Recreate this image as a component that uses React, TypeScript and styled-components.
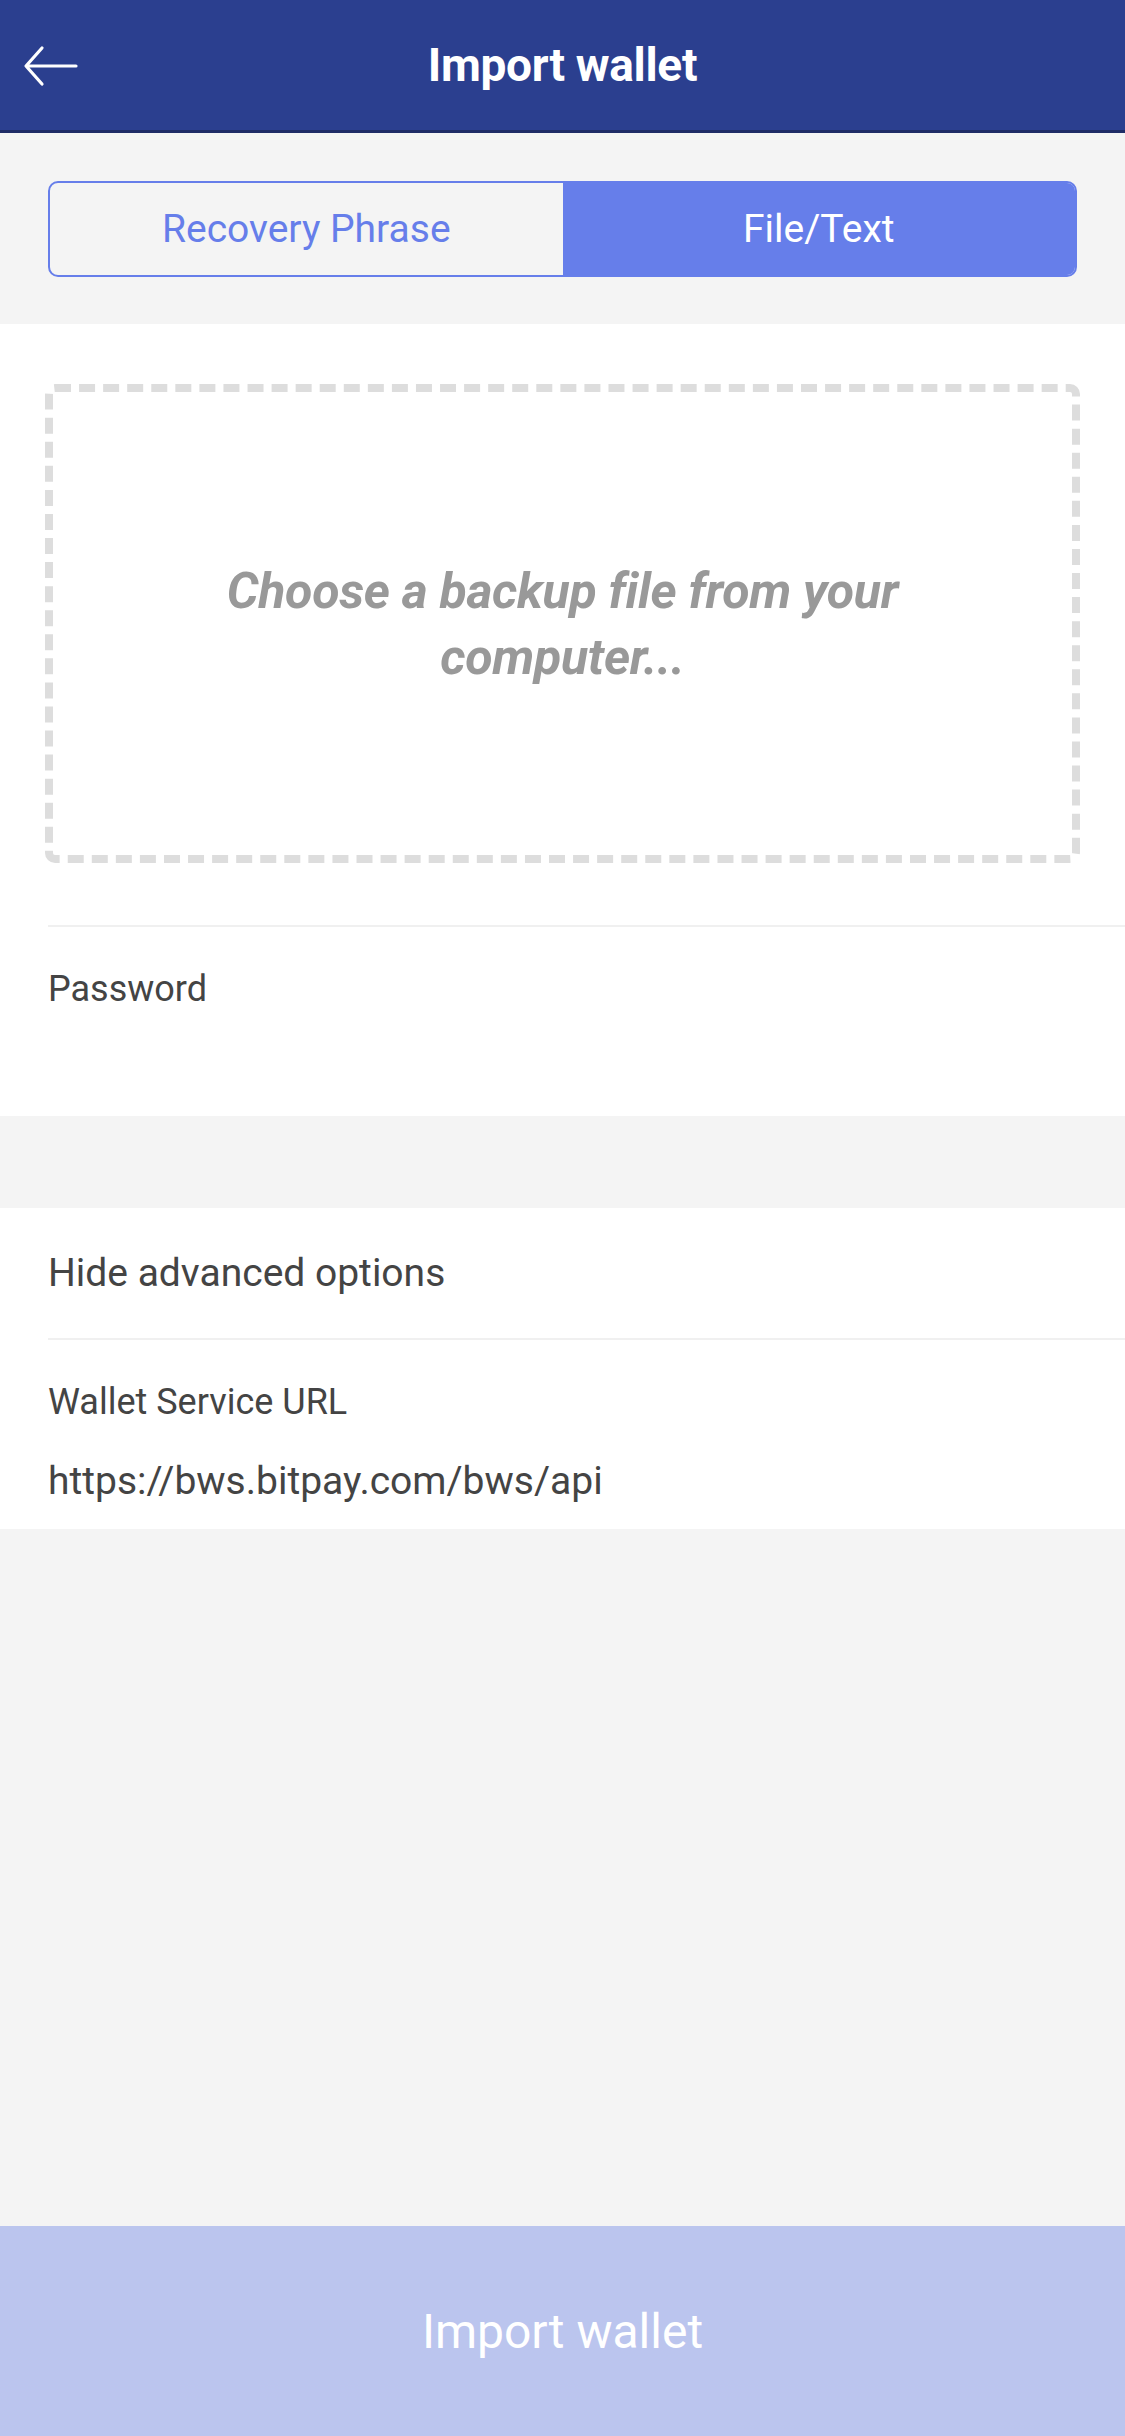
import React from "react";
import styled, { createGlobalStyle } from "styled-components";

const Global = createGlobalStyle`
  html, body { margin: 0; padding: 0; background: #f4f4f4; }
  * { box-sizing: border-box; }
  body { font-family: Roboto, "Liberation Sans", Arial, sans-serif; }
`;

const Page = styled.div`
  min-height: 100vh;
  display: flex;
  flex-direction: column;
  background: #f4f4f4;
`;

const Header = styled.header`
  height: 133px;
  background: #2b3f8f;
  border-bottom: 3px solid #1f2c66;
  display: flex;
  align-items: center;
  justify-content: center;
  position: relative;
`;

const BackButton = styled.button`
  position: absolute;
  left: 20px;
  top: 43px;
  width: 60px;
  height: 46px;
  border: 0;
  background: transparent;
  padding: 0;
  display: flex;
  align-items: center;
  justify-content: center;
`;

const Title = styled.h1`
  margin: 0;
  color: #fff;
  font-size: 46px;
  font-weight: 700;
  letter-spacing: -0.3px;
`;

const SegmentArea = styled.div`
  padding: 48px 48px 47px;
`;

const Segment = styled.div`
  display: grid;
  grid-template-columns: 1fr 1fr;
  height: 96px;
  border: 2.5px solid #667eea;
  border-radius: 10px;
  overflow: hidden;
`;

const SegmentButton = styled.div<{ $active?: boolean }>`
  display: flex;
  align-items: center;
  justify-content: center;
  font-size: 39px;
  color: ${(p) => (p.$active ? "#ffffff" : "#667eea")};
  background: ${(p) => (p.$active ? "#667eea" : "transparent")};
`;

const WhiteSection = styled.section`
  background: #ffffff;
`;

const DropZone = styled.div`
  margin: 60px 45px 62px;
  height: 479px;
  border: 8px dashed #dddddd;
  border-radius: 10px;
  display: flex;
  align-items: center;
  justify-content: center;
  padding: 0 140px;
`;

const DropText = styled.div`
  color: #999999;
  font-size: 50px;
  font-style: italic;
  font-weight: 700;
  line-height: 66px;
  text-align: center;
  letter-spacing: -0.3px;
`;

const Item = styled.div<{ $divider?: boolean }>`
  margin-left: 48px;
  border-top: ${(p) => (p.$divider ? "2px solid #f0f0f0" : "0")};
`;

const StackedField = styled.div`
  padding: 42px 0 25px;
  display: flex;
  flex-direction: column;
  gap: 36px;
`;

const Label = styled.div`
  font-size: 36px;
  color: #444444;
  line-height: 41px;
`;

const Value = styled.div`
  font-size: 39px;
  color: #444444;
  height: 45px;
  line-height: 45px;
`;

const Gap = styled.div`
  height: 92px;
`;

const ToggleRow = styled.div`
  height: 130px;
  display: flex;
  align-items: center;
  font-size: 39px;
  color: #444444;
`;

const Spacer = styled.div`
  flex: 1;
`;

const ImportButton = styled.button`
  height: 210px;
  border: 0;
  background: #bbc5ee;
  color: #ffffff;
  font-family: Roboto, "Liberation Sans", Arial, sans-serif;
  font-size: 48px;
  font-weight: 400;
  width: 100%;
`;

export default function App() {
  return (
    <Page>
      <Global />
      <Header>
        <BackButton aria-label="Back">
          <svg width="56" height="42" viewBox="0 0 56 42" fill="none">
            <path
              d="M54 21H5M20 3L4 21L20 39"
              stroke="#fff"
              strokeWidth="3.2"
              strokeLinecap="round"
              strokeLinejoin="round"
            />
          </svg>
        </BackButton>
        <Title>Import wallet</Title>
      </Header>
      <SegmentArea>
        <Segment>
          <SegmentButton>Recovery Phrase</SegmentButton>
          <SegmentButton $active>File/Text</SegmentButton>
        </Segment>
      </SegmentArea>
      <WhiteSection>
        <DropZone>
          <DropText>Choose a backup file from your computer...</DropText>
        </DropZone>
        <Item $divider>
          <StackedField>
            <Label>Password</Label>
            <Value />
          </StackedField>
        </Item>
      </WhiteSection>
      <Gap />
      <WhiteSection>
        <Item>
          <ToggleRow>Hide advanced options</ToggleRow>
        </Item>
        <Item $divider>
          <StackedField>
            <Label>Wallet Service URL</Label>
            <Value>https://bws.bitpay.com/bws/api</Value>
          </StackedField>
        </Item>
      </WhiteSection>
      <Spacer />
      <ImportButton>Import wallet</ImportButton>
    </Page>
  );
}
